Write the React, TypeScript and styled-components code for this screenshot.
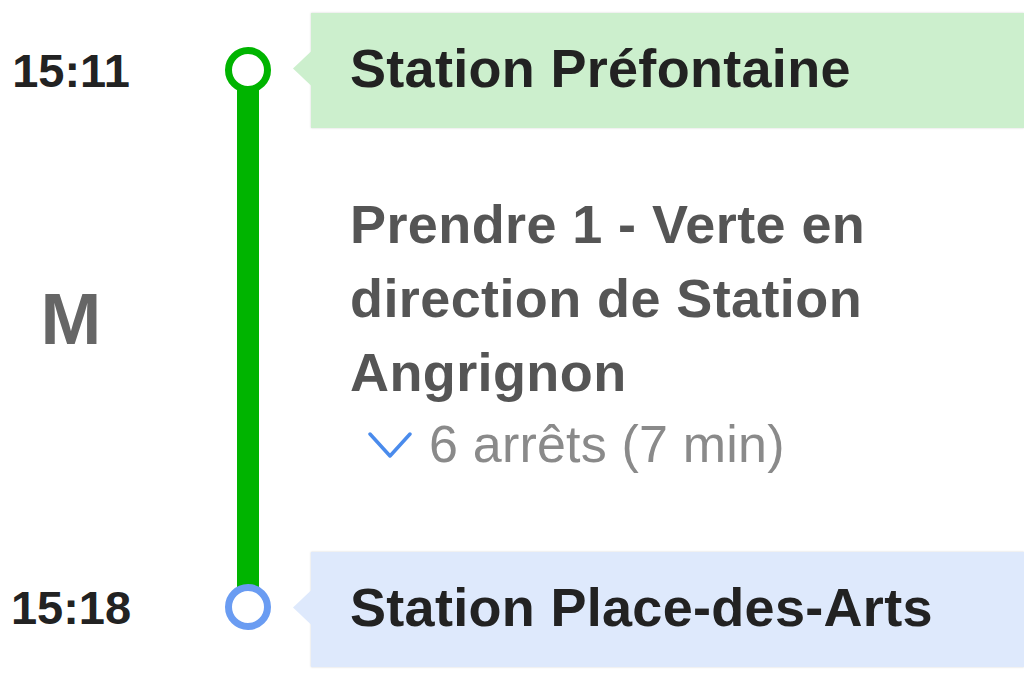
import React from "react";
import styled, { createGlobalStyle } from "styled-components";

const GlobalStyle = createGlobalStyle`
  html, body {
    margin: 0;
    padding: 0;
    background: #ffffff;
  }
  body {
    font-family: "Liberation Sans", Arial, Helvetica, sans-serif;
    -webkit-font-smoothing: antialiased;
  }
`;

const Trip = styled.div`
  display: grid;
  grid-template-columns: 142px 151px 1fr;
  grid-template-rows: 141px 1fr 145px;
  height: 683px;
  overflow: hidden;
`;

const Time = styled.div<{ $row: number; $pad: string }>`
  grid-column: 1;
  grid-row: ${(p) => p.$row};
  display: flex;
  align-items: center;
  justify-content: center;
  padding: ${(p) => p.$pad};
  font-size: 47px;
  font-weight: 700;
  color: #222222;
`;

const Mode = styled.div`
  grid-column: 1;
  grid-row: 2;
  padding-top: 141px;
  text-align: center;
  font-size: 73px;
  line-height: 73px;
  font-weight: 700;
  color: #666666;
`;

const Track = styled.div`
  grid-column: 2;
  grid-row: 1 / 4;
  display: flex;
  flex-direction: column;
  align-items: center;
  padding: 47px 0 53px 61px;
`;

const Dot = styled.div<{ $color: string }>`
  width: 46px;
  height: 46px;
  box-sizing: border-box;
  border-radius: 50%;
  border: 7px solid ${(p) => p.$color};
  background: #ffffff;
  flex: none;
`;

const Line = styled.div`
  flex: 1;
  width: 22px;
  margin: -3px 0;
  background: #00b400;
`;

const StopCell = styled.div<{ $row: number; $pad: string }>`
  grid-column: 3;
  grid-row: ${(p) => p.$row};
  padding: ${(p) => p.$pad};
  padding-left: 18px;
`;

const StopBox = styled.div<{ $bg: string }>`
  position: relative;
  height: 115px;
  box-sizing: border-box;
  display: flex;
  align-items: center;
  padding: 0 0 6px 39px;
  background: ${(p) => p.$bg};
  box-shadow: 0 0 2px rgba(0, 0, 0, 0.18);
  font-size: 54px;
  letter-spacing: 0.3px;
  font-weight: 700;
  color: #222222;
  white-space: nowrap;

  &::before {
    content: "";
    position: absolute;
    left: -18px;
    top: 50%;
    margin-top: -20px;
    width: 19px;
    height: 36px;
    background: ${(p) => p.$bg};
    clip-path: polygon(0 50%, 100% 0, 100% 100%);
  }
`;

const Leg = styled.div`
  grid-column: 3;
  grid-row: 2;
  padding: 46px 130px 0 57px;
`;

const Instruction = styled.div`
  font-size: 54px;
  line-height: 74px;
  letter-spacing: 0.4px;
  font-weight: 700;
  color: #555555;
`;

const Stops = styled.div`
  display: flex;
  align-items: center;
  gap: 17px;
  padding: 5px 0 0 18px;
  font-size: 52px;
  line-height: 60px;
  letter-spacing: 0.2px;
  color: #8a8a8a;

  svg {
    flex: none;
    margin-top: 2px;
  }
`;

export default function App() {
  return (
    <>
      <GlobalStyle />
      <Trip>
        <Time $row={1} $pad="0">15:11</Time>
        <Mode>M</Mode>
        <Time $row={3} $pad="0 0 6px 0">15:18</Time>

        <Track>
          <Dot $color="#00b400" />
          <Line />
          <Dot $color="#6a9cf2" />
        </Track>

        <StopCell $row={1} $pad="13px 0">
          <StopBox $bg="#ccefcd">Station Préfontaine</StopBox>
        </StopCell>

        <Leg>
          <Instruction>Prendre 1 - Verte en direction de Station Angrignon</Instruction>
          <Stops>
            <svg width="44" height="27" viewBox="0 0 44 27">
              <polyline
                points="2,2 22,24 42,2"
                fill="none"
                stroke="#4a8bec"
                strokeWidth="3.5"
                strokeLinecap="round"
                strokeLinejoin="round"
              />
            </svg>
            <span>6 arrêts (7 min)</span>
          </Stops>
        </Leg>

        <StopCell $row={3} $pad="14px 0 16px">
          <StopBox $bg="#dee9fc">Station Place-des-Arts</StopBox>
        </StopCell>
      </Trip>
    </>
  );
}
